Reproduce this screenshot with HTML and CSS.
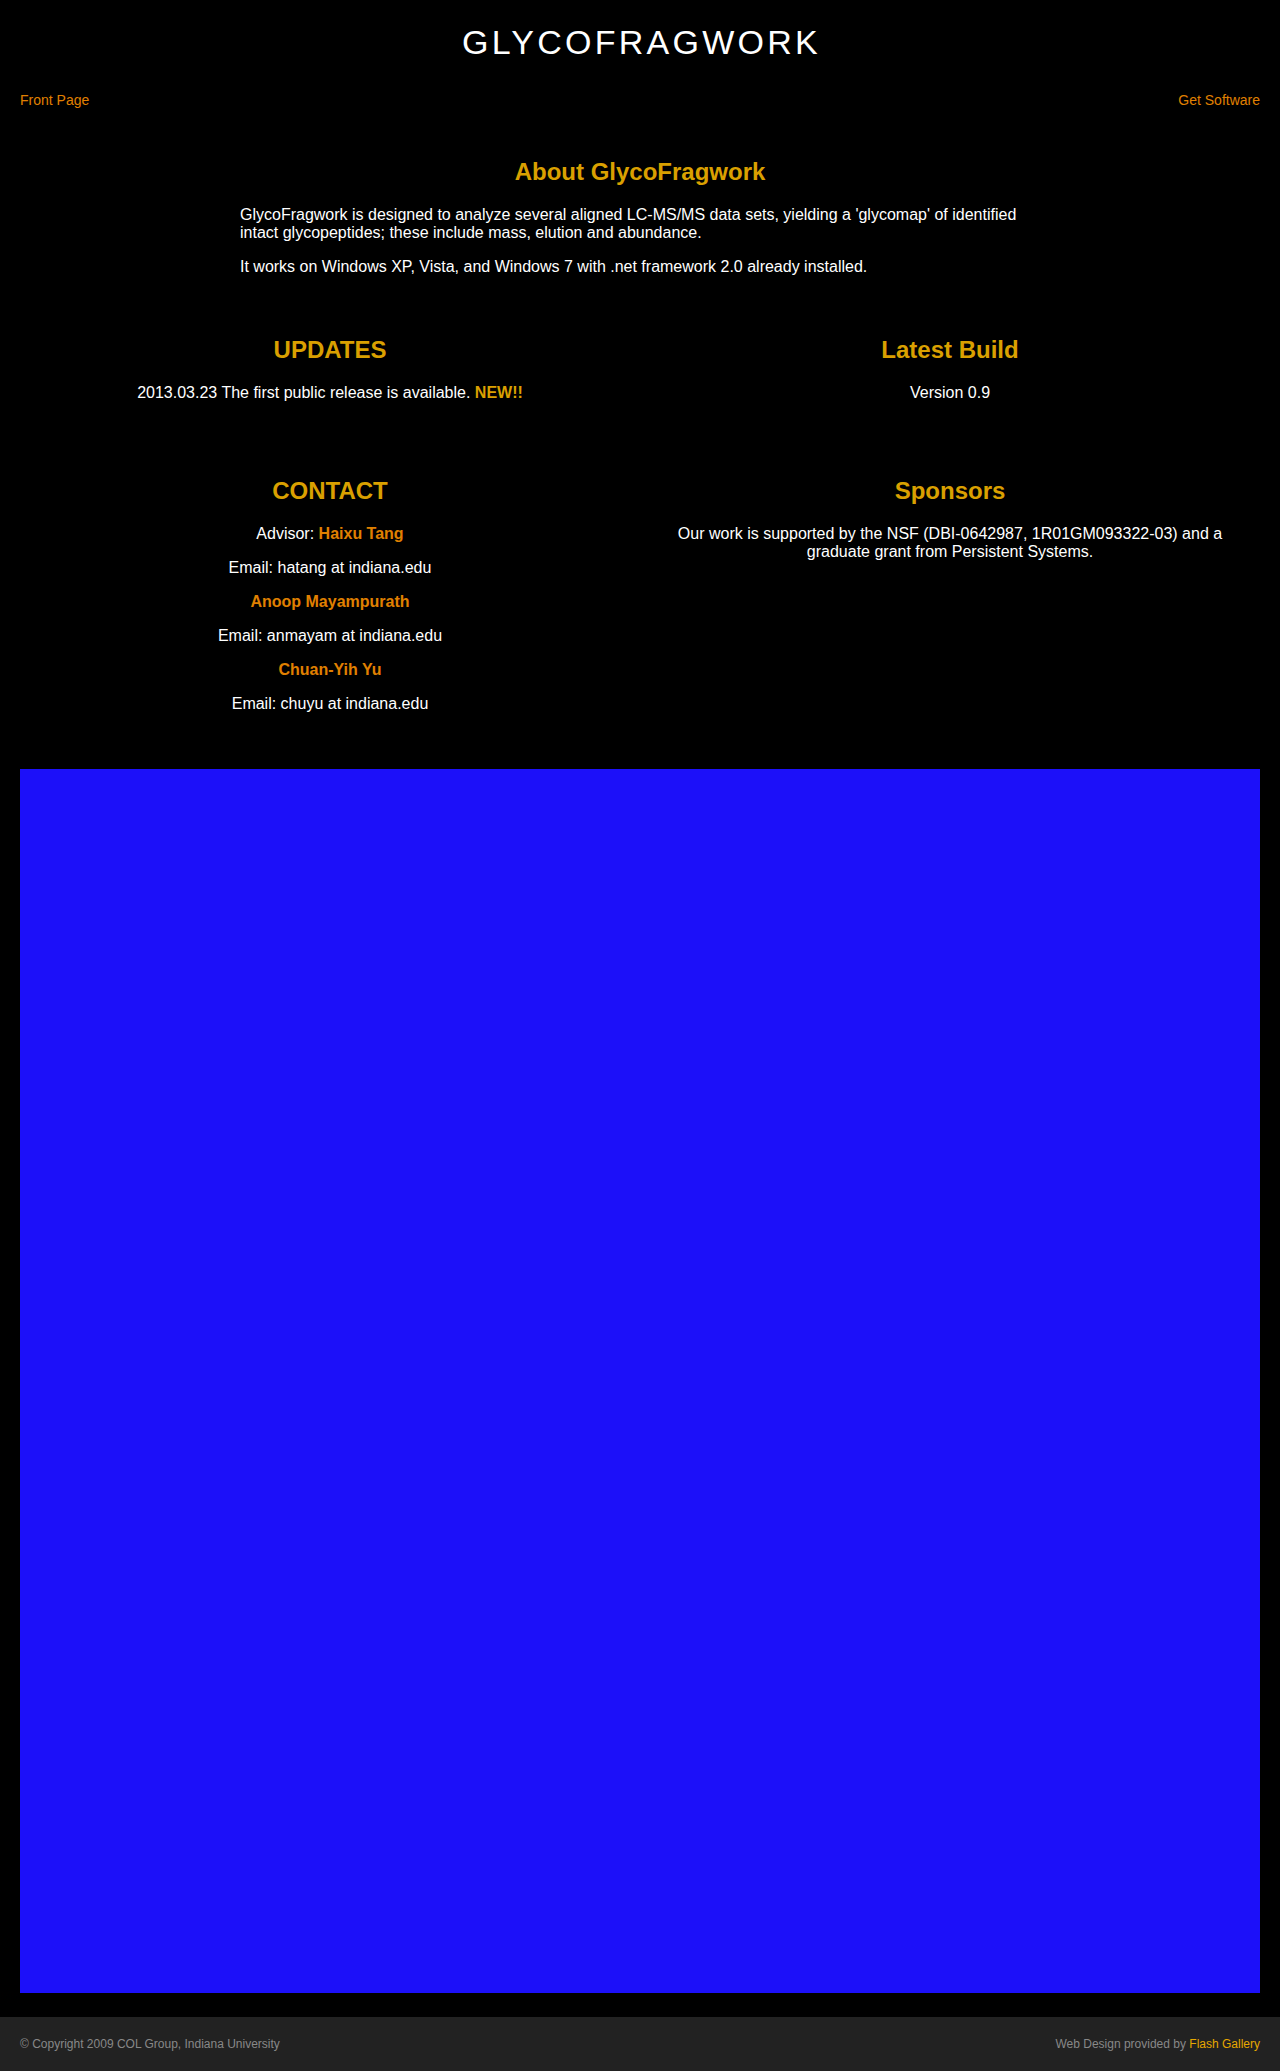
FILE: index.html
```html
<!DOCTYPE html>
<html lang="en">
<head>
<meta charset="utf-8">
<title>GlycoFragwork</title>
<link rel="stylesheet" href="styles.css">
</head>
<body>
<div class="page">
  <header class="header">
    <h1 class="site-title">GlycoFragwork</h1>
    <nav class="nav">
      <a class="nav-link" href="#">Front Page</a>
      <a class="nav-link" href="#">Get Software</a>
    </nav>
  </header>

  <section class="about">
    <h2 class="heading">About GlycoFragwork</h2>
    <p class="text">GlycoFragwork is designed to analyze several aligned LC-MS/MS data sets, yielding a 'glycomap' of identified intact glycopeptides; these include mass, elution and abundance.</p>
    <p class="text">It works on Windows XP, Vista, and Windows 7 with .net framework 2.0 already installed.</p>
  </section>

  <section class="row row-updates">
    <div class="col">
      <h2 class="heading">UPDATES</h2>
      <p class="text">2013.03.23 The first public release is available. <span class="new">NEW!!</span></p>
    </div>
    <div class="col">
      <h2 class="heading">Latest Build</h2>
      <p class="text">Version 0.9</p>
    </div>
  </section>

  <section class="row row-contact">
    <div class="col">
      <h2 class="heading">CONTACT</h2>
      <p class="text">Advisor: <span class="name">Haixu Tang</span></p>
      <p class="text">Email: hatang at indiana.edu</p>
      <p class="text"><span class="name">Anoop Mayampurath</span></p>
      <p class="text">Email: anmayam at indiana.edu</p>
      <p class="text"><span class="name">Chuan-Yih Yu</span></p>
      <p class="text">Email: chuyu at indiana.edu</p>
    </div>
    <div class="col">
      <h2 class="heading">Sponsors</h2>
      <p class="text">Our work is supported by the NSF (DBI-0642987, 1R01GM093322-03) and a graduate grant from Persistent Systems.</p>
    </div>
  </section>

  <div class="media"></div>
</div>

<footer class="footer">
  <span class="copy">&copy; Copyright 2009 COL Group, Indiana University</span>
  <span class="credit">Web Design provided by <a class="credit-link" href="#">Flash Gallery</a></span>
</footer>
</body>
</html>
```

FILE: styles.css
```css
html, body {
  margin: 0;
  padding: 0;
  background: #000;
}

body {
  font-family: "Liberation Sans", Arial, sans-serif;
  color: #fff;
}

.page {
  padding: 0 20px;
}

.header {
  padding-top: 22px;
}

.site-title {
  margin: 0;
  font-size: 34px;
  line-height: 40px;
  font-weight: normal;
  text-transform: uppercase;
  letter-spacing: 3.25px;
  text-indent: 3px;
  text-align: center;
  color: #fff;
}

.nav {
  display: flex;
  justify-content: space-between;
  margin-top: 30px;
}

.nav-link {
  font-size: 14px;
  line-height: 16px;
  color: #e08000;
  text-decoration: none;
}

.heading {
  margin: 0 0 20px;
  font-size: 24px;
  line-height: 28px;
  font-weight: bold;
  color: #daa000;
  text-align: center;
}

.text {
  margin: 0 0 16px;
  font-size: 16px;
  line-height: 18px;
}

.text:last-child {
  margin-bottom: 0;
}

.about {
  width: 800px;
  margin: 50px auto 0;
}

.row {
  display: grid;
  grid-template-columns: 1fr 1fr;
  text-align: center;
}

.col {
  padding: 0 20px;
}

.row-updates {
  margin-top: 60px;
}

.row-contact {
  margin-top: 75px;
}

.new {
  font-weight: bold;
  color: #daa000;
}

.name {
  font-weight: bold;
  color: #e08000;
}

.media {
  margin-top: 56px;
  height: 1224px;
  background: #1c10f9;
}

.footer {
  margin-top: 24px;
  display: flex;
  justify-content: space-between;
  padding: 20px;
  background: #222;
  font-size: 12px;
  line-height: 14px;
  color: #888;
}

.credit-link {
  color: #e6a800;
  text-decoration: none;
}
```
